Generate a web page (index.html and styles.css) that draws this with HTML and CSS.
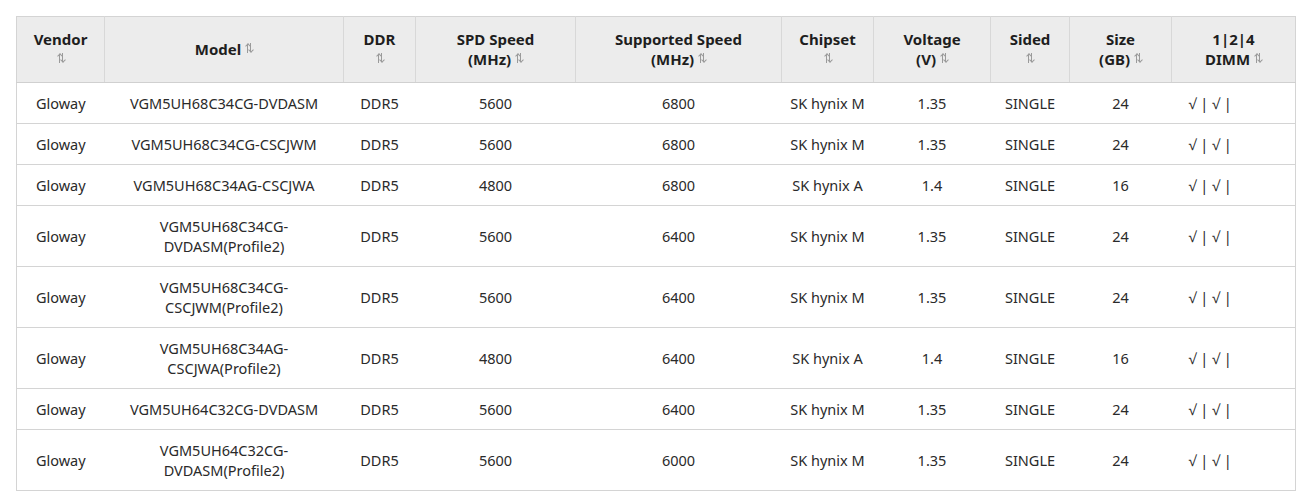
FILE: index.html
```html
<!DOCTYPE html>
<html>
<head>
<meta charset="utf-8">
<link rel="stylesheet" href="styles.css">
</head>
<body>
<div class="wrap">
<table class="qvl">
<colgroup>
<col style="width:88px"><col style="width:239px"><col style="width:72px"><col style="width:160px"><col style="width:206px"><col style="width:92px"><col style="width:117px"><col style="width:79px"><col style="width:102px"><col style="width:124px">
</colgroup>
<thead>
<tr>
<th>Vendor<br><span class="sort"></span></th>
<th>Model <span class="sort"></span></th>
<th>DDR<br><span class="sort"></span></th>
<th>SPD Speed<br>(MHz) <span class="sort"></span></th>
<th>Supported Speed<br>(MHz) <span class="sort"></span></th>
<th>Chipset<br><span class="sort"></span></th>
<th>Voltage<br>(V) <span class="sort"></span></th>
<th>Sided<br><span class="sort"></span></th>
<th>Size<br>(GB) <span class="sort"></span></th>
<th>1|2|4<br>DIMM <span class="sort"></span></th>
</tr>
</thead>
<tbody>
<tr><td>Gloway</td><td>VGM5UH68C34CG-DVDASM</td><td>DDR5</td><td>5600</td><td>6800</td><td>SK hynix M</td><td>1.35</td><td>SINGLE</td><td>24</td><td class="dimm">√ | √ |</td></tr>
<tr><td>Gloway</td><td>VGM5UH68C34CG-CSCJWM</td><td>DDR5</td><td>5600</td><td>6800</td><td>SK hynix M</td><td>1.35</td><td>SINGLE</td><td>24</td><td class="dimm">√ | √ |</td></tr>
<tr><td>Gloway</td><td>VGM5UH68C34AG-CSCJWA</td><td>DDR5</td><td>4800</td><td>6800</td><td>SK hynix A</td><td>1.4</td><td>SINGLE</td><td>16</td><td class="dimm">√ | √ |</td></tr>
<tr><td>Gloway</td><td>VGM5UH68C34CG-<br>DVDASM(Profile2)</td><td>DDR5</td><td>5600</td><td>6400</td><td>SK hynix M</td><td>1.35</td><td>SINGLE</td><td>24</td><td class="dimm">√ | √ |</td></tr>
<tr><td>Gloway</td><td>VGM5UH68C34CG-<br>CSCJWM(Profile2)</td><td>DDR5</td><td>5600</td><td>6400</td><td>SK hynix M</td><td>1.35</td><td>SINGLE</td><td>24</td><td class="dimm">√ | √ |</td></tr>
<tr><td>Gloway</td><td>VGM5UH68C34AG-<br>CSCJWA(Profile2)</td><td>DDR5</td><td>4800</td><td>6400</td><td>SK hynix A</td><td>1.4</td><td>SINGLE</td><td>16</td><td class="dimm">√ | √ |</td></tr>
<tr><td>Gloway</td><td>VGM5UH64C32CG-DVDASM</td><td>DDR5</td><td>5600</td><td>6400</td><td>SK hynix M</td><td>1.35</td><td>SINGLE</td><td>24</td><td class="dimm">√ | √ |</td></tr>
<tr><td>Gloway</td><td>VGM5UH64C32CG-<br>DVDASM(Profile2)</td><td>DDR5</td><td>5600</td><td>6000</td><td>SK hynix M</td><td>1.35</td><td>SINGLE</td><td>24</td><td class="dimm">√ | √ |</td></tr>
</tbody>
</table>
</div>
</body>
</html>
```
FILE: styles.css
```css
html, body {
  margin: 0;
  padding: 0;
  background: #fff;
}
.wrap {
  padding: 16px;
}
.qvl {
  width: 1279px;
  table-layout: fixed;
  border-collapse: collapse;
  font-family: "Noto Sans", "Open Sans", sans-serif;
  font-size: 14.5px;
  line-height: 20px;
  color: #2a2a2a;
  border: 1px solid #d4d4d4;
}
.qvl th {
  background: #ececec;
  color: #1e1e1e;
  font-size: 15px;
  font-weight: 700;
  text-align: center;
  vertical-align: middle;
  padding: 12px 2px 13px;
  border-left: 1px solid #d8d8d8;
  border-bottom: 1px solid #d0d0d0;
}
.qvl th:first-child {
  border-left: none;
}
.qvl td {
  text-align: center;
  vertical-align: middle;
  padding: 10px 2px;
  border-bottom: 1px solid #d4d4d4;
}
.qvl td.dimm {
  text-align: left;
  padding-left: 17px;
}
.sort {
  display: inline-block;
  width: 8px;
  height: 10px;
  vertical-align: 2px;
  background:
    linear-gradient(#9a9a9a, #9a9a9a) 2px 1px / 1px 9px no-repeat,
    linear-gradient(#9a9a9a, #9a9a9a) 5px 0px / 1px 9px no-repeat;
  position: relative;
}
.sort::before,
.sort::after {
  content: "";
  position: absolute;
  width: 3px;
  height: 3px;
  border-color: #9a9a9a;
  border-style: solid;
}
.sort::before {
  left: 1px;
  top: 1px;
  border-width: 1px 0 0 1px;
  transform: rotate(45deg);
}
.sort::after {
  left: 4px;
  top: 5px;
  border-width: 0 1px 1px 0;
  transform: rotate(45deg);
}
```
